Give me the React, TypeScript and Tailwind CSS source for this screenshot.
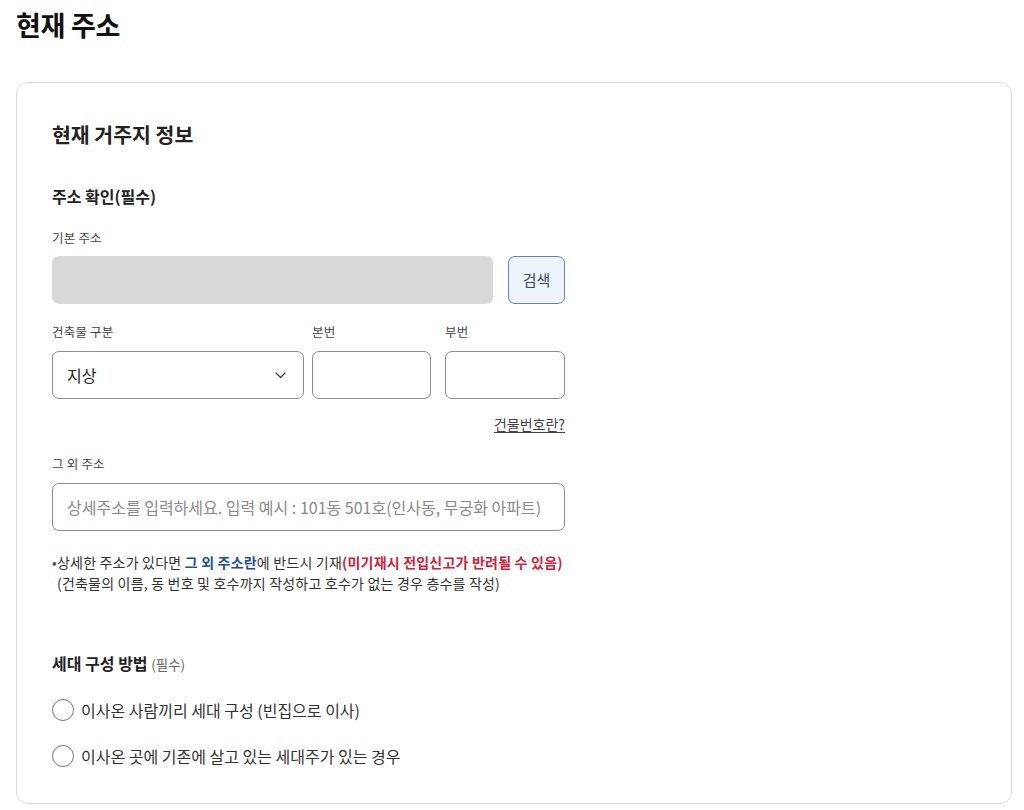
import React from "react";

export default function App() {
  return (
    <div className="min-h-[810px] bg-white px-4 pt-[6px] text-[#222]" style={{ fontFamily: '"Noto Sans CJK KR", "Noto Sans", sans-serif' }}>
      <h1 className="text-[27px] font-bold leading-[38px] tracking-[-0.3px] text-[#111]">현재 주소</h1>
      <div className="mt-[38px] h-[722px] w-[996px] rounded-[12px] border border-[#dcdcdc] pl-[35px] pt-[35px]">
        <div className="w-[513px]">
          <h2 className="text-[20.5px] font-bold leading-[32px] text-[#222]">현재 거주지 정보</h2>
          <h3 className="mt-[35px] text-[16px] font-bold leading-[22px] text-[#222]">주소 확인(필수)</h3>
          <div className="mt-[22px] text-[12.5px] leading-[18px] tracking-[0.2px] text-[#444]">기본 주소</div>
          <div className="mt-[9px] flex gap-[15px]">
            <div className="h-[48px] flex-1 rounded-[7px] bg-[#d9d9d9]" />
            <button className="h-[48px] w-[57px] rounded-[7px] border border-[#5b87bd] bg-[#eef4fb] text-[15px] text-[#3a4a6a]">검색</button>
          </div>
          <div className="mt-[19px] flex">
            <div className="w-[252px]">
              <div className="text-[12.5px] leading-[18px] tracking-[0.2px] text-[#444]">건축물 구분</div>
              <div className="mt-[10px] flex h-[48px] items-center justify-between rounded-[7px] border border-[#8c8c8c] pl-[14px] pr-[17px]">
                <span className="text-[16px] text-[#222]">지상</span>
                <svg width="11" height="7" viewBox="0 0 11 7" fill="none">
                  <path d="M1 1 L5.5 5.5 L10 1" stroke="#444" strokeWidth="1.3" strokeLinecap="round" strokeLinejoin="round" />
                </svg>
              </div>
            </div>
            <div className="ml-[8px] w-[119px]">
              <div className="text-[12.5px] leading-[18px] tracking-[0.2px] text-[#444]">본번</div>
              <div className="mt-[10px] h-[48px] rounded-[7px] border border-[#8c8c8c]" />
            </div>
            <div className="ml-[14px] flex-1">
              <div className="text-[12.5px] leading-[18px] tracking-[0.2px] text-[#444]">부번</div>
              <div className="mt-[10px] h-[48px] rounded-[7px] border border-[#8c8c8c]" />
            </div>
          </div>
          <div className="mt-[15px] flex justify-end">
            <span className="text-[14px] leading-[20px] text-[#444] underline underline-offset-2">건물번호란?</span>
          </div>
          <div className="mt-[21px] text-[12.5px] leading-[18px] tracking-[0.2px] text-[#444]">그 외 주소</div>
          <div className="mt-[10px] flex h-[48px] items-center rounded-[7px] border border-[#8c8c8c] px-[14px]">
            <span className="text-[16px] text-[#8a8a8a] whitespace-nowrap">상세주소를 입력하세요. 입력 예시 : 101동 501호(인사동, 무궁화 아파트)</span>
          </div>
          <div className="mt-[21px] text-[14px] leading-[21px] tracking-[0.2px] text-[#333] whitespace-nowrap">
            <div>
              <span className="text-[#555]">•</span>상세한 주소가 있다면 <span className="font-bold text-[#1f4e9c]">그 외 주소란</span>에 반드시 기재<span className="font-bold text-[#d4213a]">(미기재시 전입신고가 반려될 수 있음)</span>
            </div>
            <div className="pl-[5px]">(건축물의 이름, 동 번호 및 호수까지 작성하고 호수가 없는 경우 층수를 작성)</div>
          </div>
          <div className="mt-[58px] text-[16px] font-bold leading-[22px] text-[#222]">
            세대 구성 방법 <span className="text-[13.5px] font-normal text-[#666]">(필수)</span>
          </div>
          <div className="mt-[24px] flex flex-col gap-[24px]">
            <label className="flex items-center gap-[7px]">
              <span className="h-[22px] w-[22px] rounded-full border border-[#777] bg-white" />
              <span className="text-[16px] leading-[22px] text-[#333]">이사온 사람끼리 세대 구성 (빈집으로 이사)</span>
            </label>
            <label className="flex items-center gap-[7px]">
              <span className="h-[22px] w-[22px] rounded-full border border-[#777] bg-white" />
              <span className="text-[16px] leading-[22px] text-[#333]">이사온 곳에 기존에 살고 있는 세대주가 있는 경우</span>
            </label>
          </div>
        </div>
      </div>
    </div>
  );
}
